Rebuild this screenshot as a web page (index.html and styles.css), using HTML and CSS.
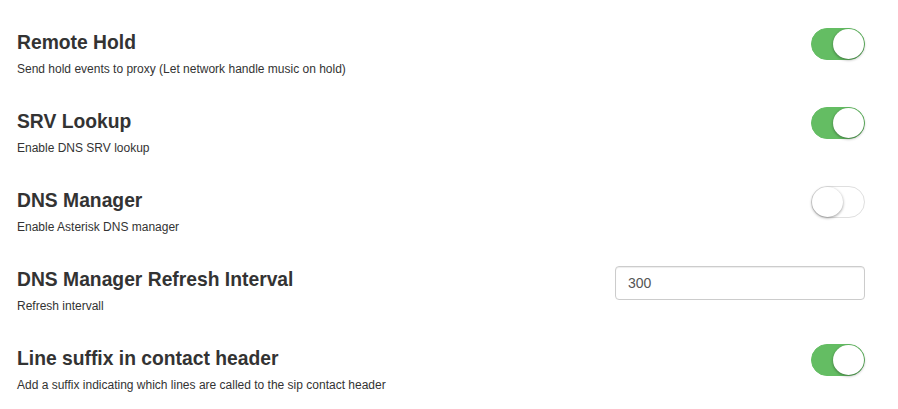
FILE: index.html
```html
<!DOCTYPE html>
<html>
<head>
<meta charset="utf-8">
<link rel="stylesheet" href="styles.css">
</head>
<body>
<div class="settings">
  <div class="row">
    <div class="info">
      <div class="title">Remote Hold</div>
      <div class="desc">Send hold events to proxy (Let network handle music on hold)</div>
    </div>
    <span class="switch on"><span class="knob"></span></span>
  </div>
  <div class="row">
    <div class="info">
      <div class="title">SRV Lookup</div>
      <div class="desc">Enable DNS SRV lookup</div>
    </div>
    <span class="switch on"><span class="knob"></span></span>
  </div>
  <div class="row">
    <div class="info">
      <div class="title">DNS Manager</div>
      <div class="desc">Enable Asterisk DNS manager</div>
    </div>
    <span class="switch"><span class="knob"></span></span>
  </div>
  <div class="row">
    <div class="info">
      <div class="title">DNS Manager Refresh Interval</div>
      <div class="desc">Refresh intervall</div>
    </div>
    <input class="field" type="text" value="300">
  </div>
  <div class="row">
    <div class="info">
      <div class="title">Line suffix in contact header</div>
      <div class="desc">Add a suffix indicating which lines are called to the sip contact header</div>
    </div>
    <span class="switch on"><span class="knob"></span></span>
  </div>
</div>
</body>
</html>
```

FILE: styles.css
```css
* { box-sizing: border-box; }
html, body {
  margin: 0;
  padding: 0;
  background: #fff;
}
body {
  font-family: "Liberation Sans", Arial, sans-serif;
  color: #333;
}
.settings {
  padding: 28px 33px 0 17px;
}
.row {
  display: flex;
  justify-content: space-between;
  align-items: flex-start;
  height: 79px;
}
.info {
  padding-top: 4px;
}
.title {
  font-size: 19.3px;
  line-height: 22px;
  font-weight: bold;
  color: #333;
}
.desc {
  margin-top: 7px;
  font-size: 12px;
  line-height: 17px;
  color: #333;
}
.switch {
  position: relative;
  display: flex;
  width: 54px;
  height: 32px;
  border-radius: 16px;
  border: 1px solid #dfdfdf;
  background: #fff;
}
.switch.on {
  background: #64bd63;
  border-color: #64bd63;
  justify-content: flex-end;
}
.knob {
  width: 31px;
  height: 30px;
  border-radius: 50%;
  background: #fff;
  box-shadow: 0 1px 3px rgba(0, 0, 0, 0.4);
}
.field {
  margin-top: 1px;
  width: 250px;
  height: 34px;
  padding: 6px 12px;
  font-family: "Liberation Sans", Arial, sans-serif;
  font-size: 14px;
  color: #555;
  border: 1px solid #ccc;
  border-radius: 4px;
  box-shadow: inset 0 1px 1px rgba(0, 0, 0, 0.075);
  outline: none;
}
```
